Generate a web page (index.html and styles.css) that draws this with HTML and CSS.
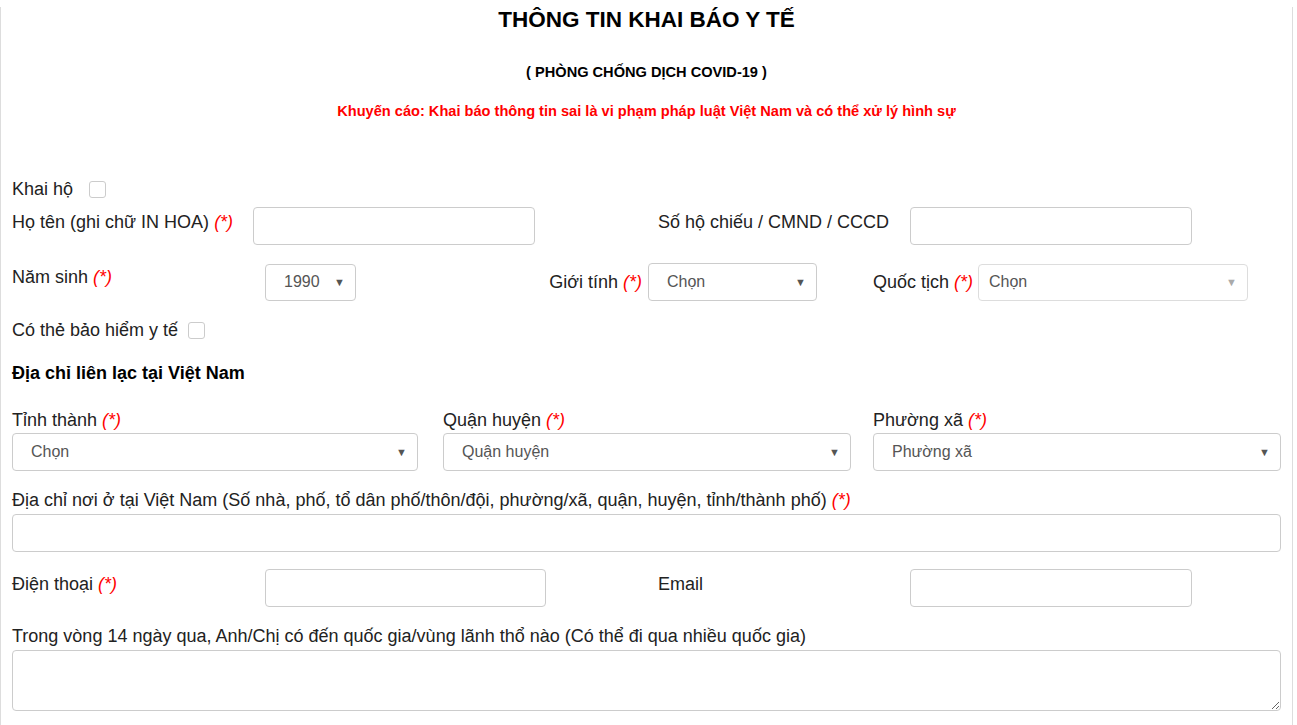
FILE: index.html
```html
<!DOCTYPE html>
<html lang="vi">
<head>
<meta charset="utf-8">
<title>Thông tin khai báo y tế</title>
<link rel="stylesheet" href="styles.css">
</head>
<body>
<div class="page">
  <h1 class="title">THÔNG TIN KHAI BÁO Y TẾ</h1>
  <p class="subtitle">( PHÒNG CHỐNG DỊCH COVID-19 )</p>
  <p class="warning">Khuyến cáo: Khai báo thông tin sai là vi phạm pháp luật Việt Nam và có thể xử lý hình sự</p>

  <div class="check-row r-khaiho">
    <span class="label">Khai hộ</span>
    <span class="checkbox"></span>
  </div>

  <div class="row r-name">
    <span class="label lbl-top">Họ tên (ghi chữ IN HOA) <i class="req">(*)</i></span>
    <div class="input w-name"></div>
    <span class="label lbl-top">Số hộ chiếu / CMND / CCCD</span>
    <div class="input w-name"></div>
  </div>

  <div class="row r-birth">
    <span class="label lbl-birth">Năm sinh <i class="req">(*)</i></span>
    <div class="select w-year"><span>1990</span><span class="caret">▼</span></div>
    <span class="label lbl-gender">Giới tính <i class="req">(*)</i></span>
    <div class="select w-gender"><span>Chọn</span><span class="caret">▼</span></div>
    <span class="label lbl-nat">Quốc tịch <i class="req">(*)</i></span>
    <div class="select select2 w-nat"><span>Chọn</span><span class="caret light">▼</span></div>
  </div>

  <div class="check-row r-bhyt">
    <span class="label">Có thẻ bảo hiểm y tế</span>
    <span class="checkbox"></span>
  </div>

  <h3 class="section">Địa chỉ liên lạc tại Việt Nam</h3>

  <div class="addr">
    <div class="field f1">
      <span class="label">Tỉnh thành <i class="req">(*)</i></span>
      <div class="select"><span>Chọn</span><span class="caret">▼</span></div>
    </div>
    <div class="field f2">
      <span class="label">Quận huyện <i class="req">(*)</i></span>
      <div class="select"><span>Quận huyện</span><span class="caret">▼</span></div>
    </div>
    <div class="field f3">
      <span class="label">Phường xã <i class="req">(*)</i></span>
      <div class="select"><span>Phường xã</span><span class="caret">▼</span></div>
    </div>
  </div>

  <div class="field full r-home">
    <span class="label">Địa chỉ nơi ở tại Việt Nam (Số nhà, phố, tổ dân phố/thôn/đội, phường/xã, quận, huyện, tỉnh/thành phố) <i class="req">(*)</i></span>
    <div class="input"></div>
  </div>

  <div class="row r-phone">
    <span class="label lbl-top">Điện thoại <i class="req">(*)</i></span>
    <div class="input w-phone"></div>
    <span class="label lbl-top">Email</span>
    <div class="input w-name"></div>
  </div>

  <div class="field full r-travel">
    <span class="label">Trong vòng 14 ngày qua, Anh/Chị có đến quốc gia/vùng lãnh thổ nào (Có thể đi qua nhiều quốc gia)</span>
    <textarea class="textarea"></textarea>
  </div>
</div>
</body>
</html>
```

FILE: styles.css
```css
* { box-sizing: border-box; }
html, body { margin: 0; padding: 0; background: #fff; }
body {
  font-family: "Liberation Sans", Arial, sans-serif;
  font-size: 18px;
  color: #222;
  overflow: hidden;
}
.page {
  width: 1293px;
  min-height: 725px;
  border-left: 1px solid #ddd;
  border-right: 1px solid #ddd;
  padding: 0 11px 0 11px;
}
.title {
  margin: 7px 0 0;
  font-size: 22.5px;
  line-height: 26px;
  font-weight: bold;
  text-align: center;
  color: #000;
}
.subtitle {
  margin: 29px 0 0;
  font-size: 14.6px;
  line-height: 20px;
  font-weight: bold;
  text-align: center;
  color: #000;
}
.warning {
  margin: 19px 0 0;
  font-size: 14.6px;
  line-height: 20px;
  font-weight: bold;
  text-align: center;
  color: #f00;
}
.label { display: block; height: 20px; line-height: 20px; color: #222; white-space: nowrap; }
.req { color: #f00; font-style: italic; }

.check-row { display: flex; align-items: center; gap: 16px; height: 20px; }
.check-row .label { display: inline-block; }
.r-khaiho { margin-top: 58px; }
.r-bhyt { margin-top: 19px; gap: 10px; }
.checkbox {
  width: 17px; height: 17px;
  border: 1px solid #ccc;
  border-radius: 3px;
  background: #fff;
}

.row { display: grid; align-items: start; }
.r-name {
  margin-top: 8px;
  grid-template-columns: 241px 405px 252px 282px;
}
.r-phone {
  margin-top: 17px;
  grid-template-columns: 253px 393px 252px 282px;
}
.lbl-top { padding-top: 5px; height: auto; }

.input {
  height: 38px;
  border: 1px solid #ccc;
  border-radius: 4px;
  background: #fff;
}
.w-name { width: 282px; }
.w-phone { width: 281px; }

.r-birth {
  margin-top: 18px;
  grid-template-columns: 253px 91px 292px 169px 161px 270px;
  align-items: center;
}
.lbl-birth { align-self: start; padding-top: 4px; height: auto; }
.lbl-gender { justify-self: end; padding-right: 6px; }
.lbl-nat { padding-left: 56px; }

.select {
  height: 37px;
  border: 1px solid #ccc;
  border-radius: 4px;
  background: #fff;
  display: flex;
  align-items: center;
  justify-content: space-between;
  padding: 0 10px 0 18px;
  color: #555;
  font-size: 16px;
}
.w-year { width: 91px; }
.w-gender { width: 169px; height: 38px; }
.select2 { padding-left: 10px; border-color: #ddd; }
.w-nat { width: 270px; }
.caret { font-size: 11px; color: #555; }
.caret.light { color: #aaa; }

.section {
  margin: 23px 0 0;
  font-size: 18px;
  line-height: 20px;
  font-weight: bold;
  color: #000;
}

.addr {
  margin-top: 27px;
  display: grid;
  grid-template-columns: 406px 25px 408px 22px 408px;
}
.f1 { grid-column: 1; }
.f2 { grid-column: 3; }
.f3 { grid-column: 5; }
.field { display: flex; flex-direction: column; gap: 4px; }
.addr .field { gap: 3px; }
.field .select { width: 100%; height: 38px; }

.r-home { margin-top: 19px; }
.r-home .input { height: 38px; }
.r-travel { margin-top: 19px; }
.textarea {
  display: block;
  width: 100%;
  height: 61px;
  border: 1px solid #ccc;
  border-radius: 4px;
  resize: vertical;
  font: inherit;
  margin: 0;
}
```
